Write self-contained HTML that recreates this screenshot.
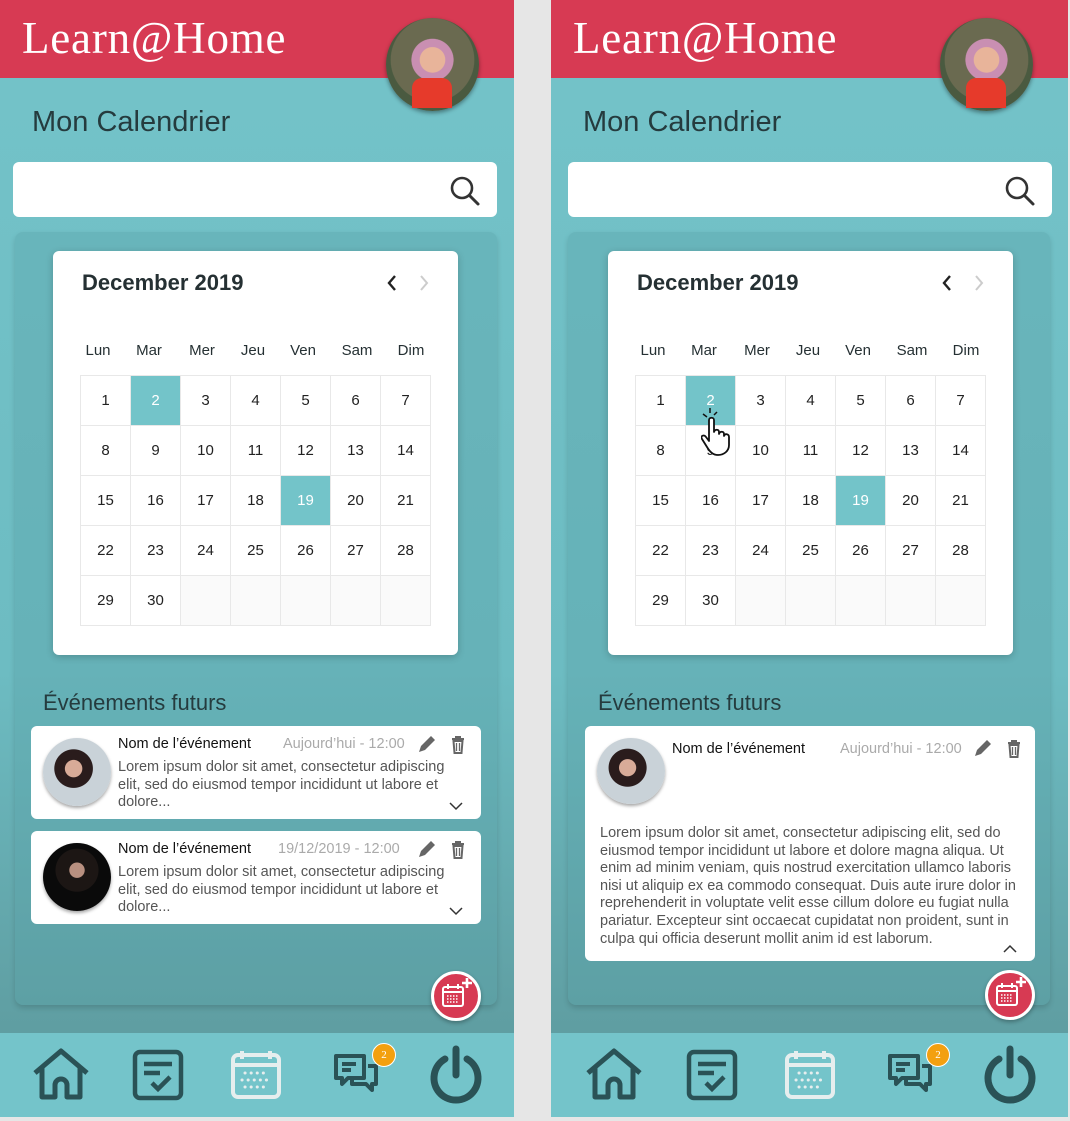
<!DOCTYPE html>
<html><head><meta charset="utf-8">
<style>
*{box-sizing:border-box;margin:0;padding:0}
body{width:1070px;height:1121px;background:#e6e6e6;position:relative;overflow:hidden;font-family:"Liberation Sans",sans-serif}
.ph{position:absolute;top:0;height:1117px;background:linear-gradient(180deg,#74c3c9 0%,#6dbcc2 60%,#5f9ea2 92%);overflow:hidden}
.hdr{position:absolute;left:0;top:0;right:0;height:78px;background:#d73a53}
.logo{position:absolute;left:22px;top:12px;color:#fff;font-family:"Liberation Serif",serif;font-size:45px;letter-spacing:0.8px}
.av{position:absolute;left:386px;top:18px;width:93px;height:93px;border-radius:50%;background:radial-gradient(circle at 50% 45%,#e8b49a 0 18%,#c98fb2 19% 30%,#6a6a50 31% 60%,#4a5a40 61%);box-shadow:0 2px 4px rgba(0,0,0,.4)}
.av:after{content:"";position:absolute;left:26px;top:60px;width:40px;height:30px;background:#e63a2b;border-radius:10px 10px 0 0}
.mt{position:absolute;left:32px;top:106px;font-size:29px;color:#253b3e}
.srch{position:absolute;left:13px;top:162px;width:484px;height:55px;background:#fff;border-radius:6px}
.panel{position:absolute;left:15px;top:232px;width:482px;height:773px;background:rgba(90,160,165,.35);border-radius:8px;box-shadow:0 3px 6px rgba(0,0,0,.15)}
.cal{position:absolute;left:53px;top:251px;width:405px;height:404px;background:#fff;border-radius:6px;box-shadow:0 2px 8px rgba(0,0,0,.2)}
.mon{position:absolute;left:29px;top:19px;font-size:22px;font-weight:bold;color:#253033}
.wd{position:absolute;top:91px;width:50px;text-align:center;font-size:15px;color:#253033}
.grid{position:absolute;left:27px;top:124px;border-collapse:collapse}
.grid td{width:50px;height:50px;border:1px solid #e8e8e8;text-align:center;font-size:15px;color:#222}
.grid td.s{background:#73c4c9;color:#fff}
.grid td.e{background:#fafafa}
.evt{position:absolute;left:43px;top:690px;font-size:22px;color:#253b3e}
.card{position:absolute;background:#fff;border-radius:6px}
.ca{position:absolute;left:12px;top:12px;width:68px;height:68px;border-radius:50%;box-shadow:0 2px 3px rgba(0,0,0,.35)}
.a1{background:radial-gradient(circle at 45% 45%,#d8ab98 0 16%,#2a1c1c 17% 36%,#c9d2d8 37%)}
.a2{background:radial-gradient(circle at 50% 40%,#b89080 0 14%,#1c1614 15% 40%,#0a0a0a 41%)}
.nm{position:absolute;left:87px;top:10px;font-size:14.5px;color:#111}
.dt{position:absolute;top:10px;font-size:14.5px;color:#aaa}
.bd{position:absolute;font-size:14.5px;line-height:17.6px;color:#555}
.fab{position:absolute;width:50px;height:50px;border-radius:50%;background:#d73a53;border:3px solid #fff;box-shadow:0 2px 4px rgba(0,0,0,.3)}
.nav{position:absolute;left:0;right:0;top:1033px;height:84px;background:#74c4ca}
.nav svg{position:absolute}
.badge{position:absolute;width:24px;height:24px;border-radius:50%;background:#f3a00f;border:1px solid #fff;color:#fff;font-size:11px;text-align:center;line-height:22px;font-family:"Liberation Serif",serif}
</style></head><body>

<!-- LEFT PHONE -->
<div class="ph" style="left:0;width:514px">
 <div class="hdr"></div><div class="logo">Learn@Home</div><div class="av"></div>
 <div class="mt">Mon Calendrier</div>
 <div class="srch"><svg style="position:absolute;left:436px;top:13px" width="32" height="32" viewBox="0 0 32 32"><circle cx="13" cy="13" r="10" fill="none" stroke="#333" stroke-width="2.6"/><path d="M20.5 20.5L29 29" stroke="#333" stroke-width="3" stroke-linecap="round"/></svg></div>
 <div class="panel"></div>
 <div class="cal">
  <div class="mon">December 2019</div>
  <svg style="position:absolute;left:332px;top:22px" width="50" height="20"><path d="M10 3L4 10l6 7" fill="none" stroke="#222" stroke-width="2.4"/><path d="M36 3l6 7-6 7" fill="none" stroke="#ccc" stroke-width="2"/></svg>
  <div class="wd" style="left:20px">Lun</div><div class="wd" style="left:71px">Mar</div><div class="wd" style="left:124px">Mer</div><div class="wd" style="left:175px">Jeu</div><div class="wd" style="left:225px">Ven</div><div class="wd" style="left:279px">Sam</div><div class="wd" style="left:333px">Dim</div>
  <table class="grid">
   <tr><td>1</td><td class="s">2</td><td>3</td><td>4</td><td>5</td><td>6</td><td>7</td></tr>
   <tr><td>8</td><td>9</td><td>10</td><td>11</td><td>12</td><td>13</td><td>14</td></tr>
   <tr><td>15</td><td>16</td><td>17</td><td>18</td><td class="s">19</td><td>20</td><td>21</td></tr>
   <tr><td>22</td><td>23</td><td>24</td><td>25</td><td>26</td><td>27</td><td>28</td></tr>
   <tr><td>29</td><td>30</td><td class="e"></td><td class="e"></td><td class="e"></td><td class="e"></td><td class="e"></td></tr>
  </table>
 </div>
 <div class="evt">Événements futurs</div>
 <div class="card" style="left:31px;top:726px;width:450px;height:93px">
  <div class="ca a1"></div><div class="nm">Nom de l’événement</div><div class="dt" style="left:252px">Aujourd’hui - 12:00</div>
  <svg style="position:absolute;left:385px;top:7px" width="55" height="22"><path d="M3 19l2-6L15 3l4 4L9 17z" fill="#666"/><path d="M36 6h12M40 6V4h4v2M37.5 8h9l-1 12h-7z" fill="none" stroke="#666" stroke-width="2"/><path d="M40.5 10v8M43.5 10v8" stroke="#666" stroke-width="1.3"/></svg>
  <div class="bd" style="left:87px;top:33px">Lorem ipsum dolor sit amet, consectetur adipiscing<br>elit, sed do eiusmod tempor incididunt ut labore et<br>dolore...</div>
  <svg style="position:absolute;left:418px;top:75px" width="14" height="10"><path d="M1 2l6 6 6-6" fill="none" stroke="#333" stroke-width="1.5"/></svg>
 </div>
 <div class="card" style="left:31px;top:831px;width:450px;height:93px">
  <div class="ca a2"></div><div class="nm">Nom de l’événement</div><div class="dt" style="left:247px">19/12/2019 - 12:00</div>
  <svg style="position:absolute;left:385px;top:7px" width="55" height="22"><path d="M3 19l2-6L15 3l4 4L9 17z" fill="#666"/><path d="M36 6h12M40 6V4h4v2M37.5 8h9l-1 12h-7z" fill="none" stroke="#666" stroke-width="2"/><path d="M40.5 10v8M43.5 10v8" stroke="#666" stroke-width="1.3"/></svg>
  <div class="bd" style="left:87px;top:33px">Lorem ipsum dolor sit amet, consectetur adipiscing<br>elit, sed do eiusmod tempor incididunt ut labore et<br>dolore...</div>
  <svg style="position:absolute;left:418px;top:75px" width="14" height="10"><path d="M1 2l6 6 6-6" fill="none" stroke="#333" stroke-width="1.5"/></svg>
 </div>
 <div class="fab" style="left:431px;top:971px"><svg width="44" height="44" viewBox="0 0 44 44"><rect x="9" y="13" width="20" height="19" rx="2" fill="none" stroke="#fff" stroke-width="2"/><path d="M9 18h20M14 10v5M24 10v5" stroke="#fff" stroke-width="2"/><path d="M13 22h12M13 25h12M13 28h12" stroke="#fff" stroke-width="1.5" stroke-dasharray="1.5 1.5"/><path d="M33 4v10M28 9h10" stroke="#fff" stroke-width="2.6"/></svg></div>
 <div class="nav">
  <svg style="left:31px;top:14px" width="60" height="56" viewBox="0 0 60 56"><path d="M4 26L30 4l26 22M11 20v30h13V38a6 6 0 0 1 12 0v12h13V20" fill="none" stroke="#2a5256" stroke-width="5" stroke-linejoin="round"/></svg>
  <svg style="left:132px;top:16px" width="52" height="52" viewBox="0 0 52 52"><rect x="3" y="3" width="46" height="46" rx="5" fill="none" stroke="#2a5256" stroke-width="4.5"/><path d="M12 15h28M12 24h16M20 34l6 6 12-12" fill="none" stroke="#2a5256" stroke-width="4.5"/></svg>
  <svg style="left:230px;top:16px" width="52" height="52" viewBox="0 0 52 52"><rect x="3" y="6" width="46" height="42" rx="5" fill="none" stroke="#e6eeee" stroke-width="4"/><path d="M3 16h46M12 2v8M40 2v8" stroke="#e6eeee" stroke-width="4"/><path d="M15 24h24M12 31h28M15 38h22" stroke="#e6eeee" stroke-width="3" stroke-linecap="round" stroke-dasharray="0.1 6"/></svg>
  <svg style="left:332px;top:19px" width="50" height="52" viewBox="0 0 50 52"><path d="M4 4h28v22H16l-6 6v-6H4z" fill="none" stroke="#2a5256" stroke-width="4" stroke-linejoin="round"/><path d="M10 12h14M10 18h9" stroke="#2a5256" stroke-width="4"/><path d="M36 14h8v18h-4v6l-6-6H20v-6" fill="none" stroke="#2a5256" stroke-width="4" stroke-linejoin="round"/></svg>
  <div class="badge" style="left:372px;top:10px">2</div>
  <svg style="left:429px;top:12px" width="54" height="60" viewBox="0 0 54 60"><path d="M16 14A22 22 0 1 0 38 14" fill="none" stroke="#2a5256" stroke-width="7" stroke-linecap="round"/><path d="M27 4v26" stroke="#2a5256" stroke-width="7" stroke-linecap="round"/></svg>
 </div>
</div>

<!-- RIGHT PHONE -->
<div class="ph" style="left:551px;width:517px">
 <div class="hdr"></div><div class="logo">Learn@Home</div><div class="av" style="left:389px"></div>
 <div class="mt">Mon Calendrier</div>
 <div class="srch" style="left:17px"><svg style="position:absolute;left:436px;top:13px" width="32" height="32" viewBox="0 0 32 32"><circle cx="13" cy="13" r="10" fill="none" stroke="#333" stroke-width="2.6"/><path d="M20.5 20.5L29 29" stroke="#333" stroke-width="3" stroke-linecap="round"/></svg></div>
 <div class="panel" style="left:17px"></div>
 <div class="cal" style="left:57px">
  <div class="mon">December 2019</div>
  <svg style="position:absolute;left:332px;top:22px" width="50" height="20"><path d="M10 3L4 10l6 7" fill="none" stroke="#222" stroke-width="2.4"/><path d="M36 3l6 7-6 7" fill="none" stroke="#ccc" stroke-width="2"/></svg>
  <div class="wd" style="left:20px">Lun</div><div class="wd" style="left:71px">Mar</div><div class="wd" style="left:124px">Mer</div><div class="wd" style="left:175px">Jeu</div><div class="wd" style="left:225px">Ven</div><div class="wd" style="left:279px">Sam</div><div class="wd" style="left:333px">Dim</div>
  <table class="grid">
   <tr><td>1</td><td class="s">2</td><td>3</td><td>4</td><td>5</td><td>6</td><td>7</td></tr>
   <tr><td>8</td><td>9</td><td>10</td><td>11</td><td>12</td><td>13</td><td>14</td></tr>
   <tr><td>15</td><td>16</td><td>17</td><td>18</td><td class="s">19</td><td>20</td><td>21</td></tr>
   <tr><td>22</td><td>23</td><td>24</td><td>25</td><td>26</td><td>27</td><td>28</td></tr>
   <tr><td>29</td><td>30</td><td class="e"></td><td class="e"></td><td class="e"></td><td class="e"></td><td class="e"></td></tr>
  </table>
  <svg style="position:absolute;left:93px;top:157px" width="44" height="48" viewBox="0 0 44 48"><path d="M2 6l4 3M9 0v5M16 4l-3 3" stroke="#111" stroke-width="1.5"/><path d="M8 12c0-3 5-3 5 0v12c1-3 5-3 5 0v2c1-3 5-3 5 0v2c1-3 5-2 5 1v8c0 6-5 10-11 10-5 0-8-3-11-8l-5-8c-2-3 2-5 4-2l3 4z" fill="#fff" stroke="#111" stroke-width="1.8" stroke-linejoin="round"/></svg>
 </div>
 <div class="evt" style="left:47px">Événements futurs</div>
 <div class="card" style="left:34px;top:726px;width:450px;height:235px">
  <div class="ca a1" style="top:12px;left:12px;height:66px;width:68px"></div><div class="nm" style="top:15px">Nom de l’événement</div><div class="dt" style="left:255px;top:15px">Aujourd’hui - 12:00</div>
  <svg style="position:absolute;left:387px;top:11px" width="55" height="22"><path d="M3 19l2-6L15 3l4 4L9 17z" fill="#666"/><path d="M36 6h12M40 6V4h4v2M37.5 8h9l-1 12h-7z" fill="none" stroke="#666" stroke-width="2"/><path d="M40.5 10v8M43.5 10v8" stroke="#666" stroke-width="1.3"/></svg>
  <div class="bd" style="left:15px;top:99px;width:430px">Lorem ipsum dolor sit amet, consectetur adipiscing elit, sed do<br>eiusmod tempor incididunt ut labore et dolore magna aliqua. Ut<br>enim ad minim veniam, quis nostrud exercitation ullamco laboris<br>nisi ut aliquip ex ea commodo consequat. Duis aute irure dolor in<br>reprehenderit in voluptate velit esse cillum dolore eu fugiat nulla<br>pariatur. Excepteur sint occaecat cupidatat non proident, sunt in<br>culpa qui officia deserunt mollit anim id est laborum.</div>
  <svg style="position:absolute;left:418px;top:218px" width="14" height="10"><path d="M1 8l6-6 6 6" fill="none" stroke="#333" stroke-width="1.5"/></svg>
 </div>
 <div class="fab" style="left:434px;top:970px"><svg width="44" height="44" viewBox="0 0 44 44"><rect x="9" y="13" width="20" height="19" rx="2" fill="none" stroke="#fff" stroke-width="2"/><path d="M9 18h20M14 10v5M24 10v5" stroke="#fff" stroke-width="2"/><path d="M13 22h12M13 25h12M13 28h12" stroke="#fff" stroke-width="1.5" stroke-dasharray="1.5 1.5"/><path d="M33 4v10M28 9h10" stroke="#fff" stroke-width="2.6"/></svg></div>
 <div class="nav">
  <svg style="left:33px;top:14px" width="60" height="56" viewBox="0 0 60 56"><path d="M4 26L30 4l26 22M11 20v30h13V38a6 6 0 0 1 12 0v12h13V20" fill="none" stroke="#2a5256" stroke-width="5" stroke-linejoin="round"/></svg>
  <svg style="left:135px;top:16px" width="52" height="52" viewBox="0 0 52 52"><rect x="3" y="3" width="46" height="46" rx="5" fill="none" stroke="#2a5256" stroke-width="4.5"/><path d="M12 15h28M12 24h16M20 34l6 6 12-12" fill="none" stroke="#2a5256" stroke-width="4.5"/></svg>
  <svg style="left:233px;top:16px" width="52" height="52" viewBox="0 0 52 52"><rect x="3" y="6" width="46" height="42" rx="5" fill="none" stroke="#e6eeee" stroke-width="4"/><path d="M3 16h46M12 2v8M40 2v8" stroke="#e6eeee" stroke-width="4"/><path d="M15 24h24M12 31h28M15 38h22" stroke="#e6eeee" stroke-width="3" stroke-linecap="round" stroke-dasharray="0.1 6"/></svg>
  <svg style="left:335px;top:19px" width="50" height="52" viewBox="0 0 50 52"><path d="M4 4h28v22H16l-6 6v-6H4z" fill="none" stroke="#2a5256" stroke-width="4" stroke-linejoin="round"/><path d="M10 12h14M10 18h9" stroke="#2a5256" stroke-width="4"/><path d="M36 14h8v18h-4v6l-6-6H20v-6" fill="none" stroke="#2a5256" stroke-width="4" stroke-linejoin="round"/></svg>
  <div class="badge" style="left:375px;top:10px">2</div>
  <svg style="left:432px;top:12px" width="54" height="60" viewBox="0 0 54 60"><path d="M16 14A22 22 0 1 0 38 14" fill="none" stroke="#2a5256" stroke-width="7" stroke-linecap="round"/><path d="M27 4v26" stroke="#2a5256" stroke-width="7" stroke-linecap="round"/></svg>
 </div>
</div>
</body></html>
